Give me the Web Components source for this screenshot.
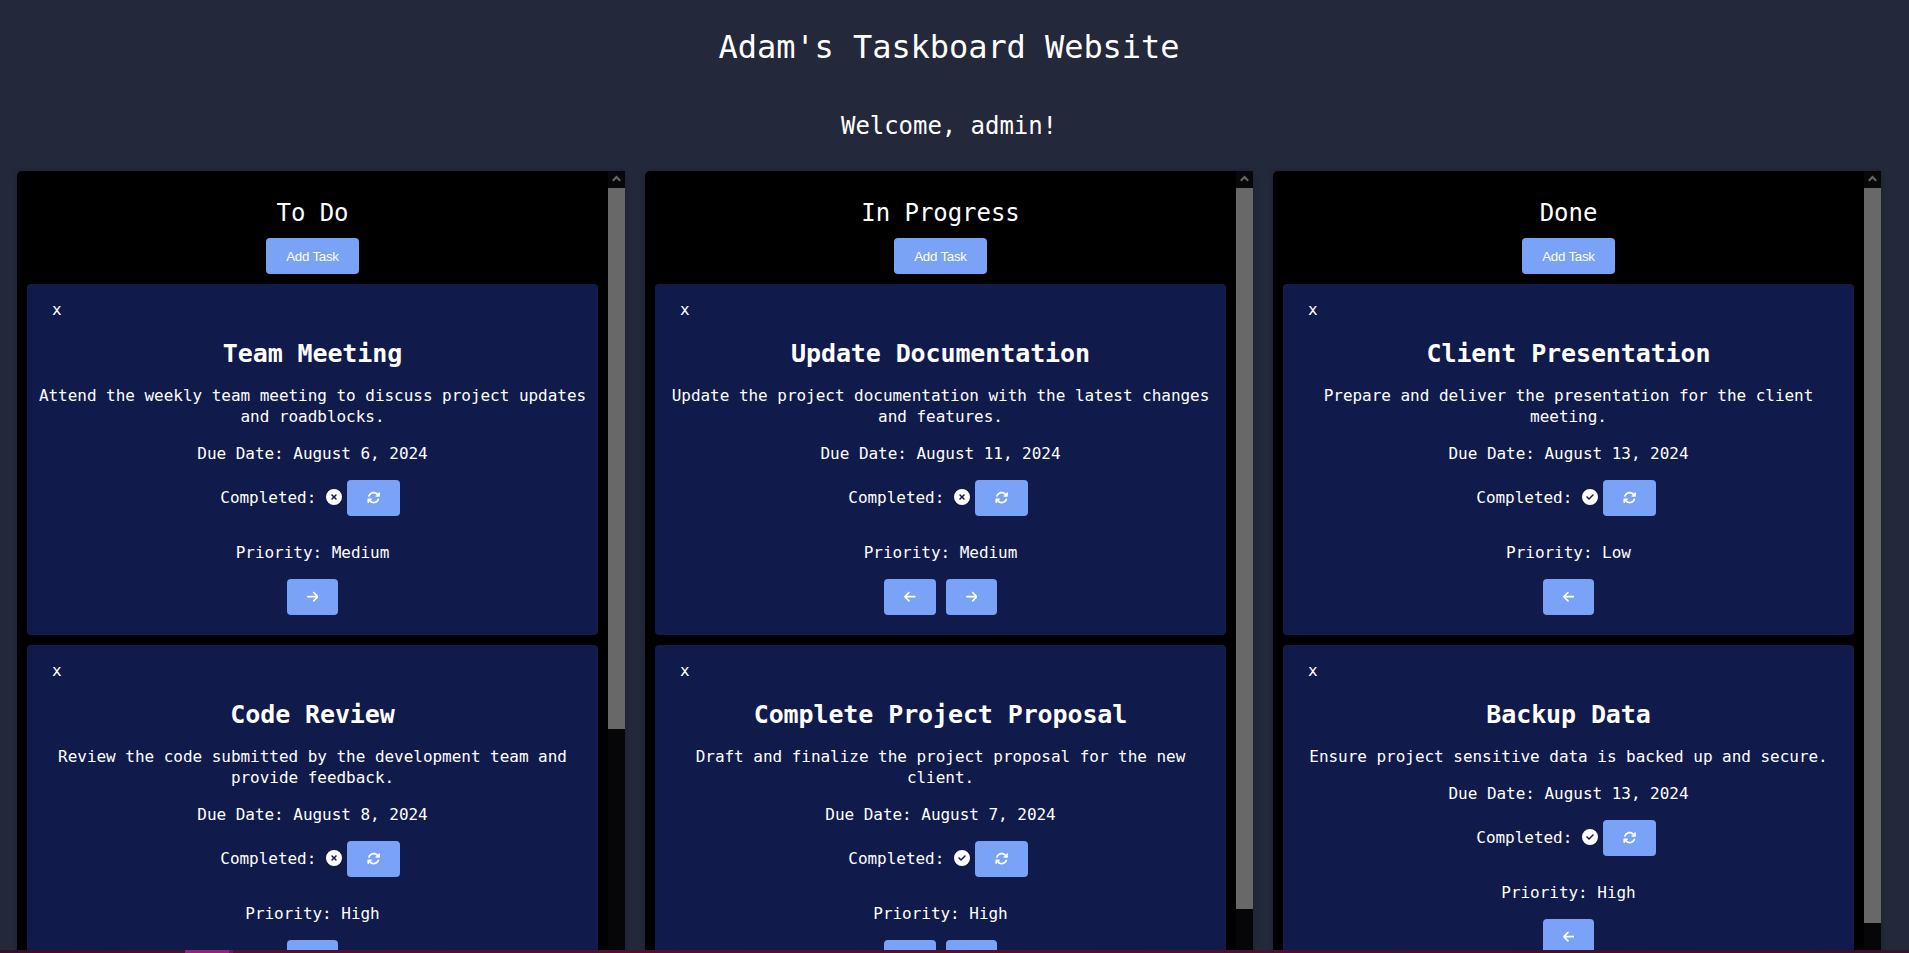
<!DOCTYPE html>
<html lang="en"><head><meta charset="utf-8"><title>Adam's Taskboard Website</title>
<style>html,body{margin:0;height:100%;overflow:hidden;background:#24283b}</style></head>
<body><task-app></task-app>
<script>
const define=(name,html)=>customElements.define(name,class extends HTMLElement{
  connectedCallback(){ if(this.shadowRoot)return; const r=this.attachShadow({mode:'open'}); r.innerHTML=typeof html==='function'?html(this):html; }
});
const icons={
 left:['0 0 448 512','M9.4 233.4c-12.5 12.5-12.5 32.8 0 45.3l160 160c12.5 12.5 32.8 12.5 45.3 0s12.5-32.8 0-45.3L109.2 288 416 288c17.7 0 32-14.3 32-32s-14.3-32-32-32l-306.7 0L214.6 118.600c12.5-12.5 12.5-32.800 0-45.300s-32.800-12.500-45.300 0l-160 160z'],
 right:['0 0 448 512','M438.600 278.600c12.500-12.500 12.500-32.800 0-45.300l-160-160c-12.500-12.500-32.800-12.500-45.300 0s-12.500 32.800 0 45.300L338.800 224 32 224c-17.700 0-32 14.300-32 32s14.300 32 32 32l306.700 0L233.400 393.400c-12.500 12.500-12.500 32.800 0 45.300s32.800 12.500 45.300 0l160-160z'],
 sync:['0 0 512 512','M105.100 202.600c7.700-21.800 20.200-42.300 37.800-59.800c62.500-62.500 163.800-62.500 226.300 0L386.300 160 352 160c-17.700 0-32 14.300-32 32s14.300 32 32 32l111.500 0c0 0 0 0 0 0l.4 0c17.700 0 32-14.300 32-32l0-112c0-17.700-14.300-32-32-32s-32 14.300-32 32l0 35.200L414.400 97.600c-87.500-87.500-229.300-87.500-316.800 0C73.200 122 55.600 150.700 44.800 181.400c-5.900 16.700 2.900 34.900 19.500 40.800s34.900-2.900 40.800-19.500zM39 289.300c-5 1.500-9.800 4.200-13.700 8.200c-4 4-6.700 8.800-8.100 14c-.3 1.200-.6 2.500-.8 3.800c-.3 1.700-.4 3.400-.4 5.100L16 432c0 17.700 14.300 32 32 32s32-14.300 32-32l0-35.100 17.600 17.500c87.500 87.400 229.300 87.400 316.700 0c24.400-24.400 42.100-53.100 52.900-83.700c5.900-16.700-2.900-34.900-19.500-40.800s-34.900 2.900-40.800 19.500c-7.700 21.800-20.200 42.300-37.800 59.800c-62.500 62.500-163.800 62.500-226.300 0l-.1-.1L125.600 352l34.400 0c17.700 0 32-14.300 32-32s-14.300-32-32-32L48.400 288c-1.600 0-3.200.1-4.800.3s-3.100.5-4.600 1z'],
 no:['0 0 512 512','M256 512A256 256 0 1 0 256 0a256 256 0 1 0 0 512zM175 175c9.400-9.400 24.600-9.400 33.900 0l47 47 47-47c9.400-9.400 24.600-9.400 33.900 0s9.400 24.600 0 33.900l-47 47 47 47c9.400 9.400 9.400 24.600 0 33.900s-24.600 9.400-33.900 0l-47-47-47 47c-9.400 9.400-24.600 9.400-33.900 0s-9.400-24.600 0-33.900l47-47-47-47c-9.400-9.400-9.400-24.600 0-33.900z'],
 yes:['0 0 512 512','M256 512A256 256 0 1 0 256 0a256 256 0 1 0 0 512zM369 209L241 337c-9.400 9.400-24.600 9.400-33.900 0l-64-64c-9.400-9.400-9.400-24.600 0-33.900s24.600-9.400 33.900 0l47 47L335 175c9.400-9.400 24.600-9.400 33.900 0s9.400 24.600 0 33.900z']};
define('fa-icon',el=>{const [vb,d]=icons[el.getAttribute('name')];
 return `<style>:host{display:inline-flex;height:1em}svg{height:1em;display:block;fill:currentColor}</style><svg viewBox="${vb}" style="width:${vb.split(' ')[2]/512}em"><path d="${d}"/></svg>`});
define('task-button',`<style>:host{display:inline-flex}button{all:unset;box-sizing:border-box;display:flex;align-items:center;justify-content:center;height:36px;padding:0 20px;border-radius:4px;background:#7aa2f7;color:#fff;font:13.333px "Liberation Sans",Arial,sans-serif;white-space:nowrap;letter-spacing:var(--track,0)}</style><button><slot></slot></button>`);
define('task-card',el=>{const g=n=>el.getAttribute(n);
 return `<style>:host{display:block;background:#101b4b;border-radius:4px;height:351px;box-sizing:border-box;text-align:center;flex:none;overflow:hidden}
 .x{display:block;text-align:left;padding:15px 0 0 25px;line-height:21px}
 h3{margin:17px 0 0;font-size:25px;line-height:33px;font-weight:700;letter-spacing:-.11px}
 p{margin:16px 0 0;line-height:21px;padding:0 10px}.d{margin-top:15px}
 .c{display:flex;justify-content:center;align-items:center;height:36px;margin-top:16px;padding-right:4.500px}.c>span{padding-bottom:2px}.c fa-icon{margin:0 5px 2px 9.600px}
 .p{margin-top:26px}
 .b{display:flex;gap:10px;justify-content:center;margin-top:16px}</style>
 <span class="x">x</span><h3>${g('name')}</h3><p class="d"><slot></slot></p><p>Due Date: August ${g('day')}, 2024</p>
 <div class="c"><span>Completed:</span><fa-icon name="${g('done')}"></fa-icon><task-button><fa-icon style="margin:0" name="sync"></fa-icon></task-button></div>
 <p class="p">Priority: ${g('priority')}</p><div class="b">${g('moves').split(' ').map(m=>`<task-button><fa-icon name="${m}"></fa-icon></task-button>`).join('')}</div>`});
define('task-column',el=>`<style>:host{display:flex;width:608px;height:900px;background:#000;border-radius:5px 0 0 5px;overflow:hidden;box-shadow:0 0 5px rgba(0,0,0,.2)}
 .m{flex:1;display:flex;flex-direction:column;align-items:stretch;padding:0 10px;gap:10px}
 header{text-align:center;padding-top:26px}h2{margin:0 0 8px;font-size:24px;line-height:33px;font-weight:400;letter-spacing:-.050px}task-button{vertical-align:top;--track:-.25px}
 .s{width:17px;background:#060608}.a{height:17px;display:flex;align-items:center;justify-content:center;background:#08080a}.a svg{margin-top:-2px}.t{background:#686868;height:${el.getAttribute('thumb')}px}</style>
 <div class="m"><header><h2>${el.getAttribute('name')}</h2><task-button>Add Task</task-button></header><slot></slot></div>
 <div class="s"><div class="a"><svg width="9" height="7" viewBox="0 0 9 7"><path d="M.8 5.800L4.500 2L8.200 5.800" fill="none" stroke="#686868" stroke-width="2"/></svg></div><div class="t"></div></div>`);
define('task-app',`<style>:host{display:flex;flex-direction:column;height:953px;width:1909px;overflow:hidden;color:#fff;font:16px/21px "DejaVu Sans Mono","Liberation Mono",monospace;letter-spacing:-.033px}
 .v{height:950px;overflow:hidden;width:1898px}h1,h2{margin:0;text-align:center;font-weight:400}
 h1{font-size:32px;line-height:42px;padding-top:26px;letter-spacing:-.066px}h2{font-size:24px;line-height:32px;margin-top:42px;letter-spacing:-.050px}
 .board{display:flex;gap:20px;justify-content:center;margin-top:29px}
 footer{height:3px;display:flex;background:linear-gradient(90deg,#3a0d2b,#4e1130 12%,#540f31 50%,#3a102c)}footer i{margin-left:185px;width:44px;background:#8f2478;border-right:4px solid #6b1859}</style>
 <div class="v"><h1>Adam's Taskboard Website</h1><h2>Welcome, admin!</h2><div class="board">
 <task-column name="To Do" thumb="541"><task-card name="Team Meeting" day="6" done="no" priority="Medium" moves="right">Attend the weekly team meeting to discuss project updates and roadblocks.</task-card><task-card name="Code Review" day="8" done="no" priority="High" moves="right">Review the code submitted by the development team and provide feedback.</task-card></task-column>
 <task-column name="In Progress" thumb="721"><task-card name="Update Documentation" day="11" done="no" priority="Medium" moves="left right">Update the project documentation with the latest changes and features.</task-card><task-card name="Complete Project Proposal" day="7" done="yes" priority="High" moves="left right">Draft and finalize the project proposal for the new client.</task-card></task-column>
 <task-column name="Done" thumb="735"><task-card name="Client Presentation" day="13" done="yes" priority="Low" moves="left">Prepare and deliver the presentation for the client meeting.</task-card><task-card name="Backup Data" day="13" done="yes" priority="High" moves="left">Ensure project sensitive data is backed up and secure.</task-card></task-column>
 </div></div><footer><i></i></footer>`);
</script></body></html>
